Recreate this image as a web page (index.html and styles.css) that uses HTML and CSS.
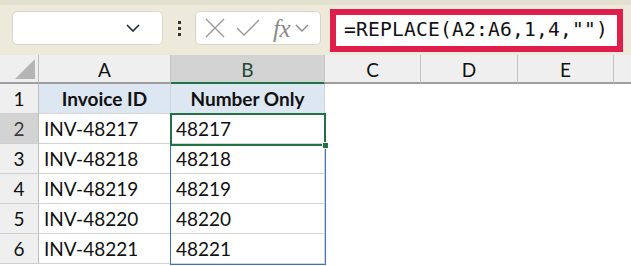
FILE: index.html
```html
<!DOCTYPE html>
<html>
<head>
<meta charset="utf-8">
<link rel="stylesheet" href="styles.css">
</head>
<body>
<div class="toolbar">
  <div class="namebox">
    <svg class="chev" width="14" height="8" viewBox="0 0 14 8"><path d="M1 1 L7 7 L13 1" fill="none" stroke="#1f2a33" stroke-width="1.6"/></svg>
  </div>
  <div class="dots"><span></span><span></span><span></span></div>
  <div class="fxbox">
    <svg width="22" height="20" viewBox="0 0 22 20"><path d="M2 1 L20 19 M20 1 L2 19" stroke="#9a9a9a" stroke-width="1.4" fill="none"/></svg>
    <svg width="24" height="20" viewBox="0 0 24 20"><path d="M1 10 L8 17 L23 2" stroke="#9a9a9a" stroke-width="1.4" fill="none"/></svg>
    <span class="fx">fx</span>
    <svg width="14" height="8" viewBox="0 0 14 8"><path d="M1 1 L7 7 L13 1" fill="none" stroke="#8a8a8a" stroke-width="1.4"/></svg>
  </div>
  <div class="formula">=REPLACE(A2:A6,1,4,"")</div>
</div>
<div class="sheet">
  <div class="corner"><div class="tri"></div></div>
  <div class="ch">A</div>
  <div class="ch sel">B</div>
  <div class="ch">C</div>
  <div class="ch">D</div>
  <div class="ch">E</div>
  <div class="ch last"></div>

  <div class="rh">1</div>
  <div class="c hd">Invoice ID</div>
  <div class="c hd">Number Only</div>
  <div class="e"></div><div class="e"></div><div class="e"></div><div class="e"></div>

  <div class="rh rsel">2</div>
  <div class="c">INV-48217</div>
  <div class="c">48217</div>
  <div class="e"></div><div class="e"></div><div class="e"></div><div class="e"></div>

  <div class="rh">3</div>
  <div class="c">INV-48218</div>
  <div class="c">48218</div>
  <div class="e"></div><div class="e"></div><div class="e"></div><div class="e"></div>

  <div class="rh">4</div>
  <div class="c">INV-48219</div>
  <div class="c">48219</div>
  <div class="e"></div><div class="e"></div><div class="e"></div><div class="e"></div>

  <div class="rh">5</div>
  <div class="c">INV-48220</div>
  <div class="c">48220</div>
  <div class="e"></div><div class="e"></div><div class="e"></div><div class="e"></div>

  <div class="rh">6</div>
  <div class="c">INV-48221</div>
  <div class="c">48221</div>
  <div class="e"></div><div class="e"></div><div class="e"></div><div class="e"></div>

  <div class="range"></div>
  <div class="active"><div class="handle"></div></div>
</div>
</body>
</html>
```
FILE: styles.css
```css
* { box-sizing: border-box; }
html, body { margin: 0; padding: 0; background: #ffffff; overflow: hidden; }
body { width: 631px; height: 266px; font-family: Lato, "Open Sans", sans-serif; }

.toolbar {
  height: 55px;
  background: #eeeadb;
  border-top: 5px solid #e4e0cf;
  display: flex;
  align-items: flex-start;
  padding: 6px 0 0 12px;
  position: relative;
}
.namebox {
  width: 151px; height: 34px;
  background: #fff;
  border: 1px solid #d9d6c9;
  border-radius: 5px;
  display: flex; align-items: center; justify-content: flex-end;
  padding-right: 22px;
}
.dots {
  width: 32px; height: 34px;
  display: flex; flex-direction: column; align-items: center; justify-content: center;
  gap: 3px;
}
.dots span { width: 3px; height: 3px; background: #333; display: block; }
.fxbox {
  width: 126px; height: 34px;
  background: #fff;
  border: 1px solid #d9d6c9;
  border-radius: 5px;
  display: flex; align-items: center;
  padding-left: 8px; gap: 10px;
}
.fx {
  font-family: "Liberation Serif", serif;
  font-style: italic;
  font-size: 25px;
  color: #8a8a8a;
  margin-left: 3px;
  margin-right: -5px;
  line-height: 1;
  letter-spacing: -0.5px;
}
.formula {
  margin-left: 9px;
  margin-top: -2px;
  width: 293px; height: 43px;
  border: 6px solid #e01e4c;
  background: #fff;
  font-family: "DejaVu Sans Mono", monospace;
  font-size: 19.6px;
  color: #111;
  padding-left: 8px;
  line-height: 30px;
  letter-spacing: 0.2px;
}

.sheet {
  position: relative;
  display: grid;
  grid-template-columns: 39px 132px 154px 96px 97px 96px 17px;
  grid-template-rows: 29px repeat(6, 30px);
  font-size: 19px;
  color: #111;
}
.corner {
  background: #efefef;
  border-right: 1px solid #bdbdbd;
  border-bottom: 2px solid #9e9e9e;
  position: relative;
}
.tri {
  position: absolute; right: 3px; bottom: 3px;
  width: 0; height: 0;
  border-left: 20px solid transparent;
  border-bottom: 20px solid #b5b5b5;
}
.ch {
  background: #efefef;
  border-right: 1px solid #c3c3c3;
  border-bottom: 2px solid #9e9e9e;
  display: flex; align-items: center; justify-content: center;
  font-size: 19px;
  padding-top: 2px;
}
.ch.sel { background: #d3d3d3; border-bottom: 2px solid #217346; color: #1f4a33; }
.ch.last { border-right: none; }
.rh {
  background: #efefef;
  border-right: 1px solid #bdbdbd;
  border-bottom: 1px solid #cfcfcf;
  display: flex; align-items: center; justify-content: center;
  font-size: 19px;
}
.rh.rsel { background: #d3d3d3; color: #3a3a3a; }
.c {
  border-right: 1px solid #d4d4d4;
  border-bottom: 1px solid #d4d4d4;
  display: flex; align-items: center;
  padding-left: 5px;
  white-space: nowrap;
}
.c.hd {
  background: #dde7f1;
  font-weight: bold;
  justify-content: center;
  padding-left: 0;
}
.e { background: #fff; }

.range {
  position: absolute;
  left: 170px; top: 58px;
  width: 156px; height: 152px;
  border: 1.5px solid #3b73c4;
  pointer-events: none;
}
.active {
  position: absolute;
  left: 170px; top: 58px;
  width: 156px; height: 33px;
  border: 2px solid #217346;
}
.handle {
  position: absolute;
  right: -5px; bottom: -5px;
  width: 7px; height: 7px;
  background: #217346;
  border: 1px solid #fff;
}
```
